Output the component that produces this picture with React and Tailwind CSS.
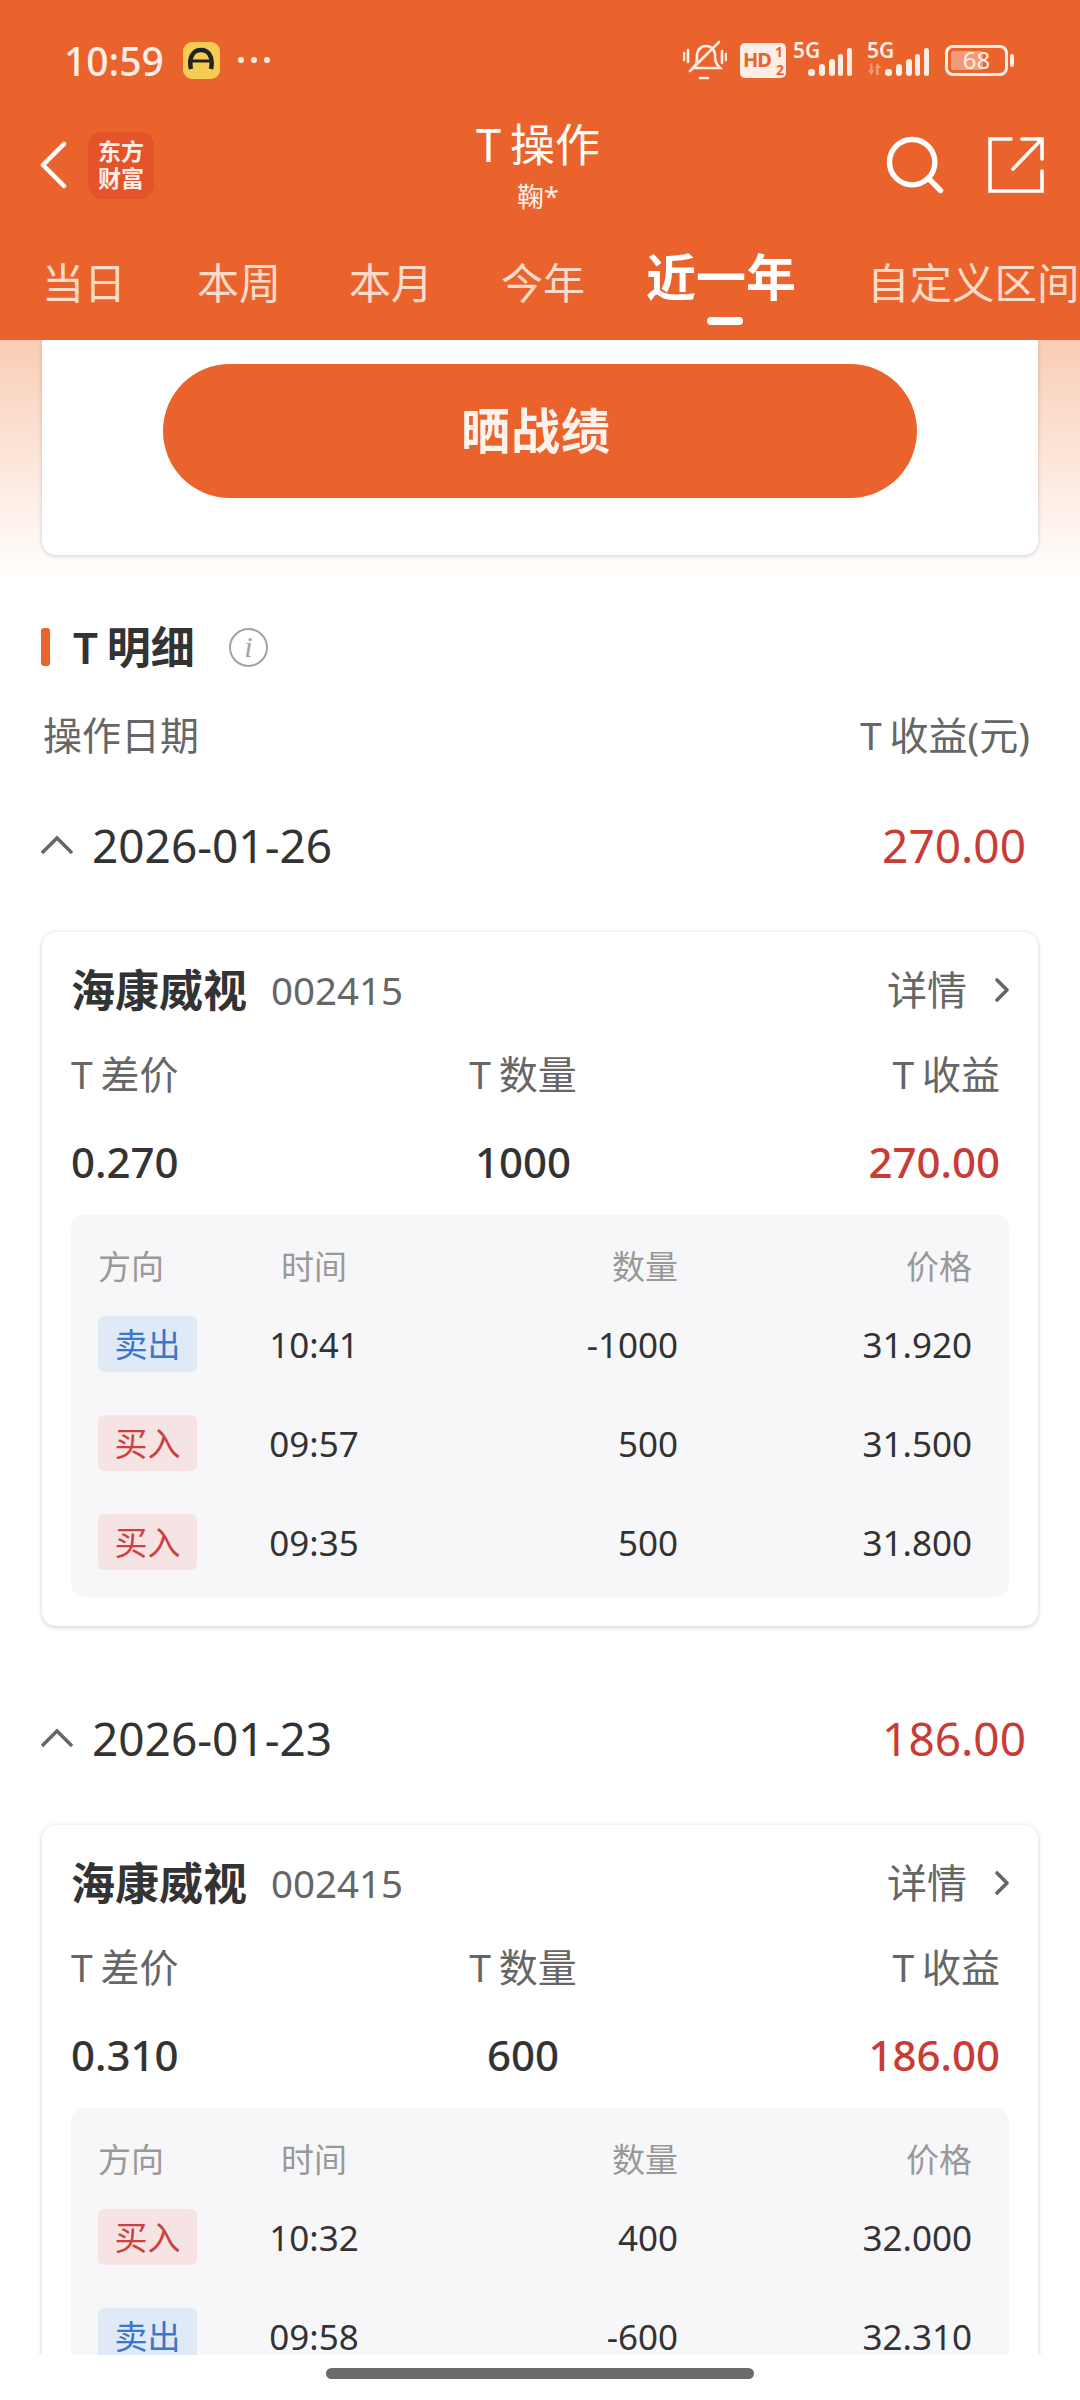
import React from 'react';
import { ChevronRight, Search } from 'lucide-react';

const FONT = '"Noto Sans", "Noto Sans CJK SC", sans-serif';

const days = [
  {
    date: '2026-01-26',
    total: '270.00',
    diff: '0.270',
    qty: '1000',
    rows: [
      ['卖出', '10:41', '-1000', '31.920'],
      ['买入', '09:57', '500', '31.500'],
      ['买入', '09:35', '500', '31.800'],
    ],
  },
  {
    date: '2026-01-23',
    total: '186.00',
    diff: '0.310',
    qty: '600',
    rows: [
      ['买入', '10:32', '400', '32.000'],
      ['卖出', '09:58', '-600', '32.310'],
    ],
  },
];

// the T in these labels sits apart from the characters after it
function T() {
  return <span className="mr-[0.2em]">T</span>;
}

function Signal({ arrows }) {
  return (
    <div className={`relative h-[36px] ${arrows ? 'w-[63px]' : 'w-[60px]'}`}>
      <span className="absolute left-0 top-0 text-[21px] leading-[17px] font-semibold text-[#fdeee6]">5G</span>
      {arrows && (
        <svg className="absolute left-0 bottom-[3px]" width="15" height="12" viewBox="0 0 15 12" fill="#f59a73">
          <path d="M3 0 h2.5 v7 h2 L4.2 12 L1 7 h2 z" />
          <path d="M9 12 h2.5 v-7 h3 L10 0 L8 5 h1 z" />
        </svg>
      )}
      <svg className="absolute right-0 bottom-[1px]" width="46" height="30" viewBox="0 0 46 30" fill="#fdeee6">
        <rect x="1" y="22" width="7" height="7" rx="3" />
        <rect x="12" y="17" width="6" height="12" rx="3" />
        <rect x="22" y="12" width="6" height="17" rx="3" />
        <rect x="31" y="7" width="5" height="22" rx="2.5" />
        <rect x="40" y="1" width="5" height="28" rx="2.5" />
      </svg>
    </div>
  );
}

function StatusBar() {
  return (
    <div className="flex items-center h-[118px] pt-[2px] pl-[64px] pr-[66px]">
      <span className="text-[39px] leading-none font-medium text-[#fdeee6]">10:59</span>
      <div className="ml-[19px] w-[37px] h-[37px] rounded-[9px] bg-[#f6cd54] flex items-center justify-center">
        <svg width="28" height="26" viewBox="0 0 28 26" fill="none" stroke="#222" strokeWidth="4.5">
          <path d="M4 22 C1 8 8 3 14 3 C20 3 27 8 24 22" />
          <path d="M4 14 H24" strokeWidth="3" />
        </svg>
      </div>
      <div className="ml-[18px] flex gap-[7px]">
        <span className="w-[6px] h-[6px] rounded-full bg-[#fdeee6]" />
        <span className="w-[6px] h-[6px] rounded-full bg-[#fdeee6]" />
        <span className="w-[6px] h-[6px] rounded-full bg-[#fdeee6]" />
      </div>
      <div className="ml-auto flex items-center">
        <svg width="44" height="40" viewBox="0 0 44 40" fill="none" stroke="#fdeee6" strokeWidth="2.6" strokeLinecap="round">
          <path d="M11 27 c3 -3 3 -5 3 -11 c0 -6 4 -10 9 -10 c5 0 8 3 9 8 c0 6 0 9 5 14 H10" />
          <path d="M17 38 h8" />
          <path d="M7 31 L36 2" />
          <path d="M1 13 v7 M5 10 v12 M39 11 v12 M43 14 v6" />
        </svg>
        <div className="ml-[13px] w-[46px] h-[35px] rounded-[5px] bg-[#fdeee6] flex items-center pl-[3px] relative overflow-hidden">
          <span className="text-[20px] leading-none font-bold tracking-[-1px] text-[#eb632c]">HD</span>
          <span className="absolute right-[3px] top-0 text-[14px] leading-[17px] font-bold text-[#eb632c]">1</span>
          <span className="absolute right-[2px] bottom-0 text-[14px] leading-[17px] font-bold text-[#eb632c]">2</span>
        </div>
        <div className="ml-[7px]"><Signal /></div>
        <div className="ml-[14px]"><Signal arrows /></div>
        <div className="ml-[15px] flex items-center">
          <div className="w-[63px] h-[31px] rounded-[8px] border-[3px] border-[#fdeee6] p-[3px] relative">
            <div className="w-[62%] h-full rounded-[3px] bg-[#f39a78]" />
            <span className="absolute inset-0 flex items-center justify-center text-[24px] leading-none text-[#fdeee6]">68</span>
          </div>
          <span className="ml-[2px] w-[4px] h-[13px] rounded-full bg-[#fdeee6]" />
        </div>
      </div>
    </div>
  );
}

function NavBar() {
  return (
    <div className="grid grid-cols-[1fr_auto_1fr] items-center h-[94px] pl-[40px] pr-[35px]">
      <div className="flex items-center">
        <svg width="27" height="48" viewBox="0 0 27 48" fill="none" stroke="#fff" strokeWidth="4.5" strokeLinecap="round" strokeLinejoin="round">
          <path d="M24 3 L3 24 L24 45" />
        </svg>
        <div className="ml-[21px] w-[66px] h-[67px] rounded-[14px] bg-[#e5532b] flex flex-col items-center justify-center text-[#fdeee6] text-[23px] leading-[27px] font-bold">
          <span>东方</span>
          <span>财富</span>
        </div>
      </div>
      <div className="flex flex-col items-center pr-[9px]">
        <span className="text-[45px] leading-[52px] text-white"><T />操作</span>
        <span className="mt-[11px] text-[27px] leading-[30px] text-[#fdeee6]">鞠*</span>
      </div>
      <div className="flex items-center justify-end">
        <Search size={68} strokeWidth={1.9} className="text-white" />
        <svg className="ml-[38px]" width="58" height="58" viewBox="0 0 58 58" fill="none" stroke="#fff" strokeWidth="3.6" strokeLinecap="round">
          <path d="M24 3 H3 V55 H55 V35" />
          <path d="M26 33 L54 4" />
          <path d="M35 3 H55 V23" />
        </svg>
      </div>
    </div>
  );
}

function Tabs() {
  return (
    <div className="flex items-center h-[128px] pt-[14px] pl-[42px] text-[42px] leading-none text-[#fcdcc9] whitespace-nowrap overflow-hidden">
      <span>当日</span>
      <span className="ml-[71px]">本周</span>
      <span className="ml-[68px]">本月</span>
      <span className="ml-[68px]">今年</span>
      <span className="relative ml-[61px] mb-[12px] text-[50px] font-bold text-white">
        近一年
        <span className="absolute left-[61px] top-[65px] w-[36px] h-[8px] rounded-full bg-white" />
      </span>
      <span className="ml-[71px] text-[42.5px]">自定义区间</span>
    </div>
  );
}

function Badge({ type }) {
  const sell = type === '卖出';
  return (
    <span className={`flex items-center justify-center w-[99px] h-[56px] rounded-[6px] text-[33px] leading-none ${sell ? 'bg-[#e0e9f6] text-[#3a76cc]' : 'bg-[#f6e3e3] text-[#cc4040]'}`}>
      {type}
    </span>
  );
}

function StockCard({ day }) {
  return (
    <div className="mx-[42px] bg-white rounded-[14px] shadow-[0_1px_5px_rgba(0,0,0,0.2)] pt-[28px] pb-[29px] px-[29px]">
      <div className="flex items-center h-[60px]">
        <span className="text-[44px] leading-none font-semibold text-[#333]">海康威视</span>
        <span className="ml-[24px] text-[38.5px] leading-none text-[#666]">002415</span>
        <span className="ml-auto text-[40px] leading-none text-[#666]">详情</span>
        <ChevronRight size={40} strokeWidth={2.2} className="ml-[15px] -mr-[13px] text-[#666]" />
      </div>
      <div className="mt-[31px] grid grid-cols-3 text-[39px] leading-[46px] text-[#666]">
        <span><T />差价</span>
        <span className="text-center pr-[34px]"><T />数量</span>
        <span className="text-right pr-[9px]"><T />收益</span>
      </div>
      <div className="mt-[40px] grid grid-cols-3 text-[42px] leading-[50px] font-medium text-[#333]">
        <span>{day.diff}</span>
        <span className="text-center pr-[34px]">{day.qty}</span>
        <span className="text-right pr-[9px] text-[#c93c36]">{day.total}</span>
      </div>
      <div className="mt-[28px] bg-[#f7f7fa] rounded-[14px] pl-[27px] pr-[37px] pt-[30px] pb-[27px]">
        <div className="grid grid-cols-[99px_234px_247px_1fr] items-center text-[33px] leading-[44px] text-[#999]">
          <span>方向</span>
          <span className="text-center">时间</span>
          <span className="text-right">数量</span>
          <span className="text-right">价格</span>
        </div>
        <div className="mt-[27px] flex flex-col gap-[43px]">
          {day.rows.map((row) => (
            <div key={row[1]} className="grid grid-cols-[99px_234px_247px_1fr] items-center text-[35px] leading-none text-[#333]">
              <Badge type={row[0]} />
              <span className="text-center">{row[1]}</span>
              <span className="text-right">{row[2]}</span>
              <span className="text-right">{row[3]}</span>
            </div>
          ))}
        </div>
      </div>
    </div>
  );
}

export default function App() {
  return (
    <div className="w-[1080px] h-[2400px] bg-white overflow-hidden flex flex-col" style={{ fontFamily: FONT }}>
      <div className="h-[340px] shrink-0 bg-[#eb632c]">
        <StatusBar />
        <NavBar />
        <Tabs />
      </div>
      <div className="flex-1 min-h-0 overflow-hidden">
        <div className="bg-gradient-to-b from-[#f8cdb5] to-white h-[240px]">
          <div className="mx-[42px] h-[215px] bg-white rounded-b-[14px] shadow-[0_1px_4px_rgba(0,0,0,0.18)] pt-[24px] px-[121px]">
            <div className="h-[134px] rounded-full bg-[#eb632c] flex items-center justify-center pr-[8px] text-[49px] font-bold tracking-[1px] text-[#fdf3ec]">
              晒战绩
            </div>
          </div>
        </div>
        <div className="mt-[48px] flex items-center px-[41px] h-[38px]">
          <span className="w-[9px] h-[38px] rounded-[3px] bg-[#eb632c]" />
          <span className="ml-[23px] text-[44px] leading-none font-semibold text-[#333]"><T />明细</span>
          <span className="ml-[34px] w-[39px] h-[39px] rounded-full border-[2.5px] border-[#a3a3a3] flex items-center justify-center text-[30px] leading-none italic text-[#a3a3a3]" style={{ fontFamily: '"Liberation Serif", serif' }}>
            i
          </span>
        </div>
        <div className="mt-[46px] flex justify-between items-center pl-[43px] pr-[50px] text-[39px] leading-[46px] text-[#666]">
          <span>操作日期</span>
          <span><T />收益(元)</span>
        </div>
        {days.map((day, i) => (
          <div key={day.date} className={i === 0 ? 'mt-[55px]' : 'mt-[80px]'}>
            <div className="flex items-center h-[64px] pl-[41px] pr-[54px] mb-[55px]">
              <svg width="32" height="20" viewBox="0 0 32 20" fill="none" stroke="#666" strokeWidth="3.4">
                <path d="M1 18 L16 3 L31 18" />
              </svg>
              <span className="ml-[19px] text-[46px] leading-none text-[#333]">{day.date}</span>
              <span className="ml-auto text-[46px] leading-none text-[#c93c36]">{day.total}</span>
            </div>
            <StockCard day={day} />
          </div>
        ))}
      </div>
      <div className="h-[45px] shrink-0 bg-white relative z-10 flex justify-center pt-[13px]">
        <span className="w-[428px] h-[11px] rounded-full bg-[#6b6b6b]" />
      </div>
    </div>
  );
}
